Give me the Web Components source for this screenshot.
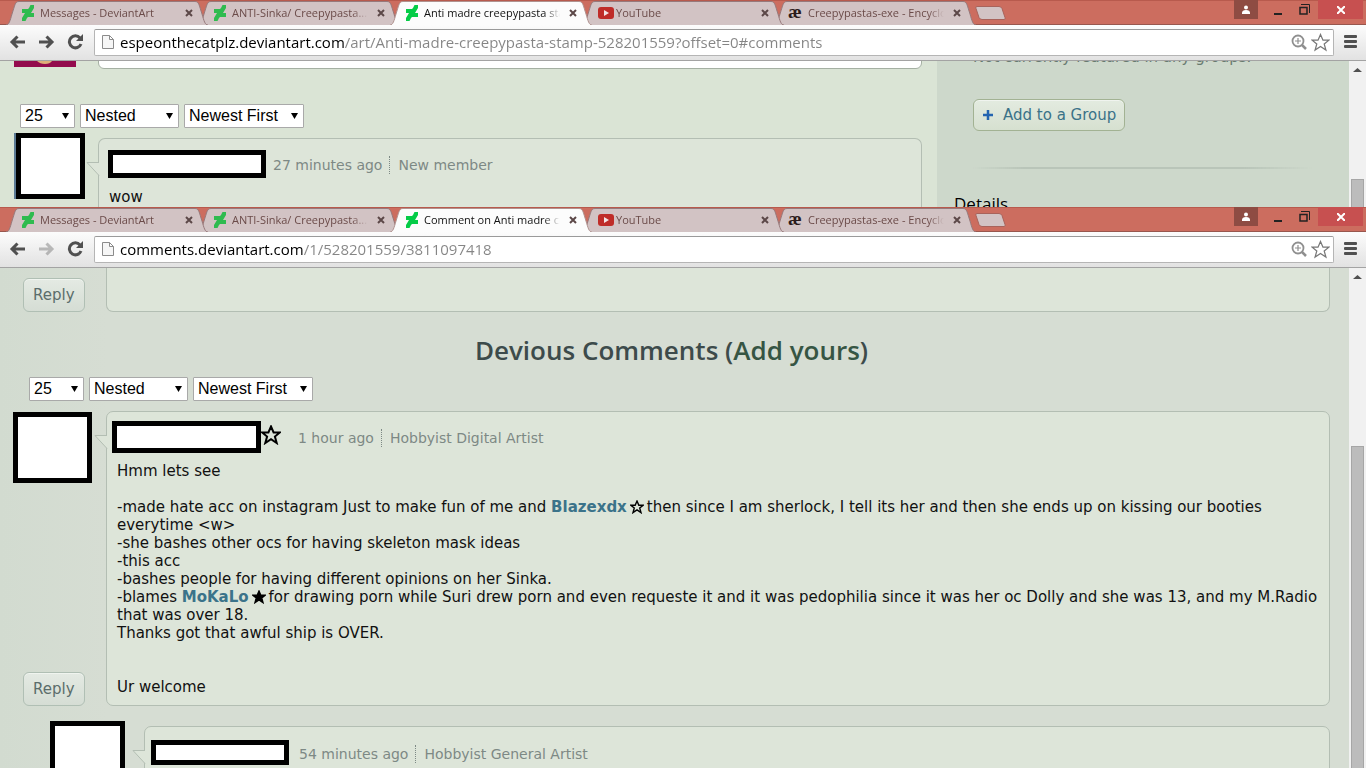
<!DOCTYPE html>
<html lang="en">
<head>
<meta charset="utf-8">
<title>Comments</title>
<style>
html, body {
    margin: 0;
    height: 100%;
    overflow: hidden;
}
body {
    font-family: "DejaVu Sans", sans-serif;
    font-size: 15px;
    line-height: 18px;
    color: #111;
    display: grid;
    grid-template-rows: 207px 1fr;
}
.art-page {
    display: grid;
    grid-template-columns: 1fr 412px;
    height: 100%;
    background: #dae4d5;
}
.main {
    display: flex;
    flex-direction: column;
    padding: 0 15px 0 14px;
}
.writer {
    display: flex;
    align-items: flex-start;
    gap: 22px;
    height: 43px;
}
.writer svg {
    display: block;
}
.writer textarea {
    flex: 1;
    box-sizing: border-box;
    height: 40px;
    margin: -32px 0 0;
    border: 1px solid #a5b0a3;
    border-radius: 6px;
    resize: none;
}
.main filter-bar {
    margin: 0 6px 5px;
}
.side {
    background: #cdd8cb;
    padding: 0 37px 0 36px;
}
.side p {
    margin: -13px 0 33px;
    color: #687a70;
}
.side hr {
    height: 1px;
    margin: 36px 0 24px;
    border: 0;
    background: linear-gradient(90deg, transparent, #b9c5b9 15%, #b9c5b9 80%, transparent);
    border-bottom: 1px solid transparent;
}
.side h2 {
    margin: 0 -19px;
    font: 500 17px/22px "Open Sans", sans-serif;
    color: #000;
}
.comments-page {
    display: flex;
    flex-direction: column;
    height: 100%;
    padding: 0 19px 0 13px;
    background: linear-gradient(90deg, #d2dbd0, #d6ddd3 8%, #d6ddd3);
    box-sizing: border-box;
}
.comments-page h1 {
    margin: 20px 0 9px;
    text-align: center;
    font: 600 26px/36px "Open Sans", sans-serif;
    color: #3d4b4b;
}
.comments-page h1 a {
    color: #365543;
    text-decoration: none;
}
.comments-page filter-bar {
    margin: 0 16px 10px;
}
.comments-page user-comment + user-comment {
    margin-top: 15px;
}
.user {
    color: #3b738a;
    font-weight: bold;
    text-decoration: none;
}
</style>
</head>
<body>

<browser-window host="espeonthecatplz.deviantart.com" path="/art/Anti-madre-creepypasta-stamp-528201559?offset=0#comments" current="Anti madre creepypasta stamp" can-forward style="--thumb-top: 101px">
    <div class="art-page">
        <div class="main">
            <div class="writer">
                <svg width="62" height="6"><path fill="#930b4d" d="M0 0h62v6H0z"/><path fill="#dfae79" d="M23 0h15q-2 3-7 3t-8-3z"/></svg>
                <textarea aria-label="Add a comment"></textarea>
            </div>
            <filter-bar></filter-bar>
            <user-comment when="27 minutes ago" rank="New member" class="art" style="--cols: 84px; --face-w: 69px; --face-h: 66px; --face-x: 2px; --pad: 11px 11px 0 9px; --name-w: 158px; --name-h: 28px; --when-gap: 7px; --text-x: 1px; --text-top: 10px; --bubble-top: 5px; --strip: 2px">wow</user-comment>
        </div>
        <aside class="side">
            <p>Not currently featured in any groups.</p>
            <da-button kind="group">Add to a Group</da-button>
            <hr>
            <h2>Details</h2>
        </aside>
    </div>
</browser-window>

<browser-window host="comments.deviantart.com" path="/1/528201559/3811097418" current="Comment on Anti madre creepypasta" style="--thumb-top: 161px">
    <div class="comments-page">
        <user-comment cut reply></user-comment>
        <h1>Devious Comments (<a href="#add">Add yours</a>)</h1>
        <filter-bar></filter-bar>
        <user-comment reply star when="1 hour ago" rank="Hobbyist Digital Artist" style="--face-w: 79px; --face-h: 71px; --name-w: 149px; --name-h: 32px; --when-gap: 17px">Hmm lets see<br><br>-made hate acc on instagram Just to make fun of me and <a class="user" href="#blazexdx">Blazexdx</a><star-mark></star-mark>then since I am sherlock, I tell its her and then she ends up on kissing our booties everytime &lt;w&gt;<br>-she bashes other ocs for having skeleton mask ideas<br>-this acc<br>-bashes people for having different opinions on her Sinka.<br>-blames <a class="user" href="#mokalo">MoKaLo</a><star-mark full></star-mark>for drawing porn while Suri drew porn and even requeste it and it was pedophilia since it was her oc Dolly and she was 13, and my M.Radio that was over 18.<br>Thanks got that awful ship is OVER.<br><br><br>Ur welcome</user-comment>
        <user-comment when="54 minutes ago" rank="Hobbyist General Artist" style="--cols: 94px; --indent: 37px; --face-w: 75px; --face-h: 71px; --pad: 13px 15px 0 6px; --name-w: 138px; --name-h: 25px; --when-gap: 10px; --bubble-top: 5px"></user-comment>
    </div>
</browser-window>

<script>
const DA_ICON = '<svg width="12" height="16" viewBox="0 0 12 16"><path d="M12 0v3L9 8h3v4H6l-1 1-1.500 3H0v-3l3-5H0V4h6l1-1 1.500-3z"/></svg>';
const YT_ICON = '<svg width="16" height="12" viewBox="0 0 16 12"><rect width="16" height="12" rx="3" fill="#bf2c28"/><path d="M6 3l5 3-5 3z" fill="#f3e4e4"/></svg>';

// five-pointed star on a 20px box
const STAR = 'M10 1.500l2.600 6h6.200l-4.900 4 1.800 6.500L10 14.200 4.300 18l1.800-6.500-4.900-4h6.200z';

function template(html) {
    const t = document.createElement('template');
    t.innerHTML = html;
    return t;
}

const tabTemplate = template(`
<style>
:host {
    display: grid;
    grid-template-columns: 13px 1fr 13px;
    width: 202px;
    height: 24px;
    margin-right: -10px;
    position: relative;
    color: #6b4b49;
    --fill: #d2c3c4;
    --edge: #97797b;
}
:host([active]) {
    color: #111;
    --fill: #fcfcfc;
    --edge: #b0928f;
}
.edge {
    display: block;
    fill: var(--fill);
    stroke: var(--edge);
}
.right {
    transform: scaleX(-1);
}
.body {
    display: flex;
    align-items: flex-start;
    box-sizing: border-box;
    min-width: 0;
    background: var(--fill);
    border-top: 1px solid var(--edge);
}
button {
    display: flex;
    align-items: center;
    height: 22px;
    border: 0;
    padding: 0;
    background: none;
    font: inherit;
    color: inherit;
}
.pick {
    flex: 1;
    min-width: 0;
    padding-left: 3px;
}
.icon {
    display: flex;
    flex: none;
    width: 18px;
    fill: #2fbb4f;
}
:host([active]) .icon {
    fill: #05cc47;
}
.wiki {
    font: bold 19px/16px "Liberation Serif", serif;
    margin: -3px 0 0 -2px;
    color: #2b1b1b;
}
.title {
    flex: 1;
    overflow: hidden;
    white-space: nowrap;
    text-align: left;
    -webkit-mask-image: linear-gradient(90deg, #000 calc(100% - 16px), transparent);
    mask-image: linear-gradient(90deg, #000 calc(100% - 16px), transparent);
}
.close {
    padding: 0 2px 0 9px;
}
.close svg {
    stroke: #5c4848;
    stroke-width: 2;
}
</style>
<svg class="edge" width="13" height="24" viewBox="0 0 13 24"><path d="M0 24C3 24 4 20 6 13C9 4 9 .5 13 .5V24z" stroke="none"/><path d="M0 24C3 24 4 20 6 13C9 4 9 .5 13 .5" fill="none"/></svg>
<div class="body">
    <button class="pick" role="tab"><span class="icon"></span><span class="title"><slot></slot></span></button>
    <button class="close" aria-label="Close tab"><svg width="8" height="8"><path d="M1 1l6 6M7 1L1 7"/></svg></button>
</div>
<svg class="edge right" width="13" height="24" viewBox="0 0 13 24"><path d="M0 24C3 24 4 20 6 13C9 4 9 .5 13 .5V24z" stroke="none"/><path d="M0 24C3 24 4 20 6 13C9 4 9 .5 13 .5" fill="none"/></svg>
`);

class BrowserTab extends HTMLElement {
    connectedCallback() {
        if (this.shadowRoot) return;
        this.attachShadow({ mode: 'open' }).appendChild(tabTemplate.content.cloneNode(true));
        const icons = { da: DA_ICON, yt: YT_ICON, wiki: '<span class="wiki">æ</span>' };
        this.shadowRoot.querySelector('.icon').innerHTML = icons[this.getAttribute('icon')];
    }
}
customElements.define('browser-tab', BrowserTab);

const windowTemplate = template(`
<style>
:host {
    display: flex;
    flex-direction: column;
    min-height: 0;
    overflow: hidden;
    background: #fff;
}
button {
    display: flex;
    align-items: center;
    justify-content: center;
    padding: 0;
    border: 0;
    background: none;
}
.strip {
    display: flex;
    flex: none;
    height: 25px;
    box-sizing: border-box;
    padding: 1px 3px 0 6px;
    background: #cc6d5f;
    box-shadow: inset 0 1px #b85a4d, inset 0 -1px #98574e;
    font: 11px/16px "Open Sans", sans-serif;
}
.new {
    align-self: flex-start;
    margin: 4px auto 0 8px;
}
.controls {
    display: flex;
    margin-top: -1px;
    height: 19px;
}
.who {
    width: 24px;
    background: #8e4c43;
}
.min {
    width: 40px;
}
.max {
    width: 12px;
    margin-right: 8px;
}
.quit {
    width: 45px;
    background: #c75050;
}
.bar {
    display: flex;
    align-items: center;
    flex: none;
    height: 36px;
    box-sizing: border-box;
    padding: 0 9px 1px;
    background: linear-gradient(#fcfcfc, #e2e2e2);
    border-bottom: 1px solid #a3a3a3;
}
.nav {
    width: 17px;
    margin-right: 12px;
}
.nav:disabled {
    opacity: .35;
}
.box {
    display: flex;
    align-items: center;
    flex: 1;
    height: 27px;
    box-sizing: border-box;
    margin: 0 10px 0 -2px;
    padding: 0 3px 0 7px;
    border: 1px solid #b5b5b5;
    border-top-color: #9a9a9a;
    border-radius: 2px;
    background: #fff;
}
input {
    flex: 1;
    min-width: 0;
    margin: 0 0 0 6px;
    padding: 0;
    border: 0;
    outline: 0;
    color: #333;
    font: 15px/24px "Open Sans", sans-serif;
    background: linear-gradient(90deg, #000 var(--host-end), #858585 var(--host-end));
    -webkit-background-clip: text;
    background-clip: text;
    -webkit-text-fill-color: transparent;
}
.box button {
    margin-left: 4px;
}
.view {
    display: grid;
    grid-template-columns: 1fr 17px;
    flex: 1;
    min-height: 0;
    overflow: hidden;
}
.page {
    min-width: 0;
    min-height: 0;
    overflow: hidden;
}
.scroll {
    display: flex;
    flex-direction: column;
    background: #f1f1f1;
}
.scroll svg {
    margin: 6px 3px 0;
}
.thumb {
    flex: 1;
    margin: var(--thumb-top) 2px 0;
    border: 1px solid #a6a6a6;
    border-bottom: 0;
    background: #bcbcbc;
}
</style>
<div class="strip">
    <browser-tab icon="da" style="z-index: 3">Messages - DeviantArt</browser-tab>
    <browser-tab icon="da" style="z-index: 2">ANTI-Sinka/ Creepypasta...</browser-tab>
    <browser-tab icon="da" active class="current" style="z-index: 4"></browser-tab>
    <browser-tab icon="yt" style="z-index: 2">YouTube</browser-tab>
    <browser-tab icon="wiki" style="z-index: 1">Creepypastas-exe - Encyclopedia</browser-tab>
    <button class="new" aria-label="New tab"><svg width="32" height="16"><path d="M3 1.500h22q2 0 3 2l3 9q1 2-1 2H8q-2 0-3-2l-3-9q-1-2 1-2z" fill="#d2c3c4" stroke="#a8635b"/></svg></button>
    <div class="controls">
        <button class="who" aria-label="User"><svg width="10" height="10" fill="#fff"><circle cx="5" cy="2.500" r="2"/><path d="M1 8q0-3 4-3t4 3v1H1z"/></svg></button>
        <button class="min" aria-label="Minimize"><svg width="8" height="12"><path d="M0 9h8v2H0z" fill="#222"/></svg></button>
        <button class="max" aria-label="Restore"><svg width="11" height="11" fill="none" stroke="#222"><path d="M2 .5h8.500V9"/><path d="M1 3.500h7V10H1z" stroke-width="1.500"/></svg></button>
        <button class="quit" aria-label="Close"><svg width="8" height="8" stroke="#fff" stroke-width="2"><path d="M0 0l8 8M8 0L0 8"/></svg></button>
    </div>
</div>
<div class="bar">
    <button class="nav" aria-label="Back"><svg width="17" height="14" fill="none" stroke="#505050" stroke-width="3"><path d="M16 7H3M8.500 1.500L3 7l5.500 5.500"/></svg></button>
    <button class="nav forward" aria-label="Forward"><svg width="17" height="14" fill="none" stroke="#505050" stroke-width="3"><path d="M1 7h13M8.500 1.500L14 7l-5.500 5.500"/></svg></button>
    <button class="nav" aria-label="Reload"><svg width="17" height="16"><path d="M13 4A6 6 0 1 0 14 10" fill="none" stroke="#505050" stroke-width="3"/><path d="M16 0v7H9z" fill="#505050"/></svg></button>
    <div class="box">
        <svg width="12" height="16" fill="#f6f6f6" stroke="#8b8b8b"><path d="M.5 1.500h7l4 4v9H.5zM7.500 1.500v4h4"/></svg>
        <input type="text" aria-label="Address" spellcheck="false">
        <button aria-label="Zoom"><svg width="16" height="16" fill="none" stroke="#8f8f8f"><circle cx="7" cy="7" r="5.500" stroke-width="1.800"/><path d="M11 11l4 4" stroke-width="2.500"/><path d="M4 7h6M7 4v6" stroke-width="1.200"/></svg></button>
        <button aria-label="Bookmark"><svg width="19" height="19" viewBox="0 0 20 20"><path d="${STAR}" fill="#fff" stroke="#777" stroke-width="1.300"/></svg></button>
    </div>
    <button aria-label="Menu"><svg width="13" height="14" fill="#505050"><rect width="13" height="3" rx="1"/><rect y="5" width="13" height="3" rx="1"/><rect y="10" width="13" height="3" rx="1"/></svg></button>
</div>
<div class="view">
    <div class="page"><slot></slot></div>
    <div class="scroll"><svg width="11" height="11"><path d="M1 5l4.500-4L10 5z" fill="#505050"/></svg><div class="thumb"></div></div>
</div>
`);

class BrowserWindow extends HTMLElement {
    connectedCallback() {
        if (this.shadowRoot) return;
        const root = this.attachShadow({ mode: 'open' });
        root.appendChild(windowTemplate.content.cloneNode(true));
        root.querySelector('.current').textContent = this.getAttribute('current');
        root.querySelector('.forward').disabled = !this.hasAttribute('can-forward');

        const input = root.querySelector('input');
        const host = this.getAttribute('host');
        input.value = host + this.getAttribute('path');

        // the host name is drawn darker than the path
        const ctx = document.createElement('canvas').getContext('2d');
        ctx.font = '15px "Open Sans", sans-serif';
        input.style.setProperty('--host-end', Math.round(ctx.measureText(host).width) + 'px');
    }
}
customElements.define('browser-window', BrowserWindow);

const filterTemplate = template(`
<style>
:host {
    display: flex;
    gap: 5px;
}
label {
    display: grid;
    align-items: center;
}
select, svg {
    grid-area: 1 / 1;
}
select {
    appearance: none;
    box-sizing: border-box;
    height: 24px;
    margin: 0;
    padding: 0 4px;
    border: 1px solid #a9a9a9;
    border-radius: 1px;
    background: #fff;
    color: #000;
    font: 16px/20px "Liberation Sans", sans-serif;
}
svg {
    justify-self: end;
    margin-right: 6px;
    pointer-events: none;
}
.count { width: 55px; }
.order { width: 99px; }
.sort { width: 120px; }
</style>
<label><select class="count" aria-label="Comments per page"><option>25</option><option>50</option></select><svg width="7" height="7"><path d="M0 0h7L3.500 6z"/></svg></label>
<label><select class="order" aria-label="Threading"><option>Nested</option><option>Flat</option></select><svg width="7" height="7"><path d="M0 0h7L3.500 6z"/></svg></label>
<label><select class="sort" aria-label="Order"><option>Newest First</option><option>Oldest First</option></select><svg width="7" height="7"><path d="M0 0h7L3.500 6z"/></svg></label>
`);

class FilterBar extends HTMLElement {
    constructor() {
        super();
        this.attachShadow({ mode: 'open' }).appendChild(filterTemplate.content.cloneNode(true));
    }
}
customElements.define('filter-bar', FilterBar);

const buttonTemplate = template(`
<style>
:host {
    display: inline-flex;
}
button {
    display: flex;
    align-items: center;
    gap: 9px;
    box-sizing: border-box;
    height: 34px;
    padding: 0 9px;
    border: 1px solid #b0bfb4;
    border-radius: 6px;
    background: linear-gradient(#e4eae3, #d5ddd4);
    box-shadow: inset 0 1px #f0f4ef;
    color: #5b6d6b;
    font: inherit;
}
svg {
    display: none;
}
:host([kind=group]) button {
    height: 32px;
    padding: 0 8px;
    border-color: #a2b293;
    background: linear-gradient(#e3ebe0, #d6e0d0);
    color: #3a7288;
}
:host([kind=group]) svg {
    display: block;
}
</style>
<button><svg width="12" height="12"><path d="M6 1v10M1 6h10" stroke="#2364b0" stroke-width="2.500"/></svg><slot></slot></button>
`);

class DaButton extends HTMLElement {
    constructor() {
        super();
        this.attachShadow({ mode: 'open' }).appendChild(buttonTemplate.content.cloneNode(true));
    }
}
customElements.define('da-button', DaButton);

const starTemplate = template(`
<style>
:host {
    display: inline-block;
    width: 14px;
    height: 14px;
    margin: 0 3px;
    vertical-align: -2px;
}
svg {
    display: block;
    width: 100%;
    height: 100%;
    fill: none;
    stroke: #000;
    stroke-width: 2;
}
:host([full]) svg {
    fill: #000;
}
</style>
<svg viewBox="0 0 20 20"><path d="${STAR}"/></svg>
`);

class StarMark extends HTMLElement {
    constructor() {
        super();
        this.attachShadow({ mode: 'open' }).appendChild(starTemplate.content.cloneNode(true));
    }
}
customElements.define('star-mark', StarMark);

const commentTemplate = template(`
<style>
:host {
    display: grid;
    grid-template-columns: var(--cols, 93px) 1fr;
    margin-left: var(--indent, 0);
}
:host(.art) {
    flex: 1;
}
.left {
    display: flex;
    flex-direction: column;
    justify-content: space-between;
    align-items: flex-start;
}
.face, .name {
    box-sizing: border-box;
    flex: none;
    border: 5px solid #000;
    background: #fff;
}
.face {
    width: var(--face-w);
    height: var(--face-h);
    margin: 1px 0 0 var(--face-x, 0);
    box-shadow: calc(0px - var(--strip, 0px)) 0 #5b7a95;
}
:host(:not([reply])) .face {
    margin-top: 0;
}
da-button {
    margin-left: 10px;
}
.bubble {
    position: relative;
    box-sizing: border-box;
    margin-top: var(--bubble-top, 0);
    padding: var(--pad, 9px 8px 9px 5px);
    border: 1px solid #b3beb3;
    border-radius: 7px;
    background: #dde5d9;
}
:host(.art) .bubble {
    border-bottom: 0;
    border-radius: 7px 7px 0 0;
}
.tail {
    position: absolute;
    left: -13px;
    top: 23px;
    fill: #dde5d9;
    stroke: #b3beb3;
}
header {
    display: flex;
    align-items: center;
    color: #7d8985;
    font-size: 14px;
    line-height: 18px;
}
.name {
    width: var(--name-w);
    height: var(--name-h);
}
header star-mark {
    width: 20px;
    height: 20px;
    margin: 0 0 4px;
}
.when, .rank {
    margin-top: 2px;
}
.when {
    margin-left: var(--when-gap);
    padding-right: 7px;
    border-right: 1px dotted #7d8985;
}
.rank {
    margin-left: 8px;
}
.text {
    margin: var(--text-top, 9px) 0 0 var(--text-x, 5px);
}
:host([cut]) .bubble {
    height: 44px;
    border-top: 0;
    border-radius: 0 0 7px 7px;
}
:host([cut]) .bubble > *, :host([cut]) .face {
    display: none;
}
:host([cut]) .left {
    justify-content: flex-end;
}
</style>
<div class="left"><div class="face"></div></div>
<div class="bubble">
    <svg class="tail" width="14" height="15"><path d="M13 .5H1L13.500 14V.5z" stroke="none"/><path d="M13 .5H1L13 13.500" fill="none"/></svg>
    <header><span class="name"></span><span class="when"></span><span class="rank"></span></header>
    <div class="text"><slot></slot></div>
</div>
`);

class UserComment extends HTMLElement {
    constructor() {
        super();
        const root = this.attachShadow({ mode: 'open' });
        root.appendChild(commentTemplate.content.cloneNode(true));
        root.querySelector('.when').textContent = this.getAttribute('when') || '';
        root.querySelector('.rank').textContent = this.getAttribute('rank') || '';

        if (this.hasAttribute('star')) {
            root.querySelector('.name').after(document.createElement('star-mark'));
        }
        if (this.hasAttribute('reply')) {
            const btnReply = document.createElement('da-button');
            btnReply.textContent = 'Reply';
            root.querySelector('.left').appendChild(btnReply);
        }
    }
}
customElements.define('user-comment', UserComment);
</script>
</body>
</html>
